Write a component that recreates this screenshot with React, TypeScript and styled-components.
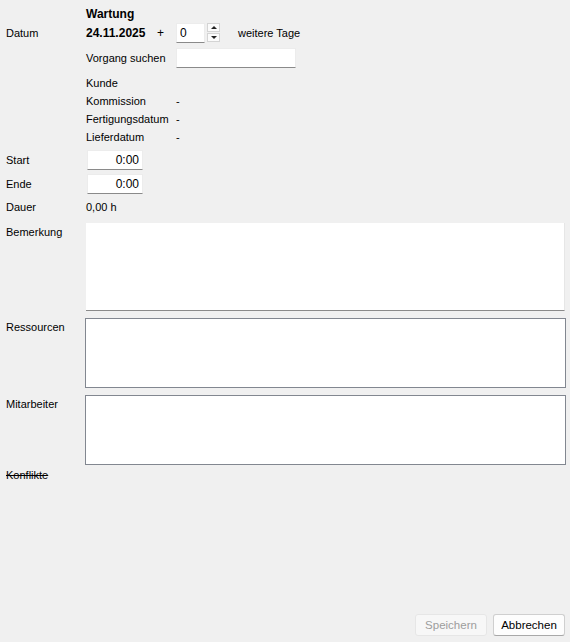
import React from "react";
import styled, { createGlobalStyle } from "styled-components";

const GlobalStyle = createGlobalStyle`
  html, body, #root {
    height: 100%;
  }
  body {
    margin: 0;
    background: #f0f0f0;
    font-family: "Liberation Sans", Arial, sans-serif;
    font-size: 11px;
    color: #000;
  }
`;

const Page = styled.div`
  min-height: 100%;
  box-sizing: border-box;
  display: flex;
  flex-direction: column;
  padding: 6px 4px 6px 6px;
`;

const Form = styled.div`
  display: grid;
  grid-template-columns: 80px 1fr;
  align-items: center;
`;

const Label = styled.div<{ $h: number; $top?: boolean; $mt?: number }>`
  height: ${({ $h }) => $h}px;
  margin-top: ${({ $mt }) => $mt ?? 0}px;
  display: flex;
  align-items: ${({ $top }) => ($top ? "flex-start" : "center")};
  padding-top: ${({ $top }) => ($top ? "3px" : "0")};
  box-sizing: border-box;
  align-self: start;
`;

const Cell = styled.div<{ $h?: number; $mt?: number; $shift?: number }>`
  ${({ $h }) => ($h ? `height: ${$h}px;` : "")}
  margin-top: ${({ $mt }) => $mt ?? 0}px;
  margin-left: ${({ $shift }) => $shift ?? 0}px;
  display: flex;
  align-items: center;
  align-self: start;
`;

const Bold = styled.span`
  font-weight: bold;
  font-size: 12px;
`;

const DateBox = styled.div`
  width: 90px;
  box-sizing: border-box;
  padding-right: 12px;
  display: flex;
  align-items: center;
  justify-content: space-between;
`;

const Plus = styled.span`
  font-size: 12px;
`;

const SpinBox = styled.div`
  display: flex;
  align-items: center;
  gap: 2px;
`;

const Field = styled.input<{ $w: number; $right?: boolean }>`
  width: ${({ $w }) => $w}px;
  height: 20px;
  box-sizing: border-box;
  border: 1px solid #ececec;
  border-bottom: 1px solid #8a8a8a;
  background: #fff;
  font: inherit;
  font-size: 12px;
  padding: 0 3px;
  text-align: ${({ $right }) => ($right ? "right" : "left")};
  outline: none;
  color: #000;
`;

const SpinButtons = styled.div`
  display: flex;
  flex-direction: column;
  gap: 1px;
`;

const SpinButton = styled.div`
  width: 13px;
  height: 9px;
  box-sizing: border-box;
  border: 1px solid #d4d4d4;
  background: #fbfbfb;
  display: flex;
  align-items: center;
  justify-content: center;
`;

const Arrow = styled.span<{ $down?: boolean }>`
  width: 0;
  height: 0;
  border-left: 3px solid transparent;
  border-right: 3px solid transparent;
  ${({ $down }) =>
    $down ? "border-top: 3px solid #222;" : "border-bottom: 3px solid #222;"}
`;

const After = styled.span`
  margin-left: 18px;
`;

const SubGrid = styled.div`
  display: grid;
  grid-template-columns: 90px 1fr;
  align-items: center;
`;

const SubLabel = styled.div<{ $h: number }>`
  height: ${({ $h }) => $h}px;
  display: flex;
  align-items: center;
`;

const Memo = styled.div<{ $h: number }>`
  height: ${({ $h }) => $h}px;
  width: 100%;
  margin-right: 1px;
  box-sizing: border-box;
  background: #fff;
  border-bottom: 1px solid #8a8a8a;
  border-right: 1px solid #e6e6e6;
`;

const ListBox = styled.div<{ $h: number }>`
  height: ${({ $h }) => $h}px;
  width: 100%;
  box-sizing: border-box;
  background: #fff;
  border: 1px solid #828790;
`;

const Struck = styled.span`
  text-decoration: line-through;
`;

const Footer = styled.div`
  margin-top: auto;
  padding-right: 1px;
  display: flex;
  justify-content: flex-end;
  gap: 6px;
`;

const Button = styled.button<{ $disabled?: boolean }>`
  width: 72px;
  height: 22px;
  box-sizing: border-box;
  font: inherit;
  font-size: 11.5px;
  border-radius: 3px;
  border: 1px solid ${({ $disabled }) => ($disabled ? "#e6e6e6" : "#cfcfcf")};
  border-bottom-color: ${({ $disabled }) => ($disabled ? "#e6e6e6" : "#a8a8a8")};
  background: ${({ $disabled }) => ($disabled ? "#f7f7f7" : "#fdfdfd")};
  color: ${({ $disabled }) => ($disabled ? "#9d9d9d" : "#000")};
  padding: 0;
`;

export default function App() {
  return (
    <>
      <GlobalStyle />
      <Page>
        <Form>
          <Label $h={16} />
          <Cell $h={16}>
            <Bold>Wartung</Bold>
          </Cell>

          <Label $h={21}>Datum</Label>
          <Cell $h={21}>
            <DateBox>
              <Bold>24.11.2025</Bold>
              <Plus>+</Plus>
            </DateBox>
            <SpinBox>
              <Field $w={29} defaultValue="0" />
              <SpinButtons>
                <SpinButton>
                  <Arrow />
                </SpinButton>
                <SpinButton>
                  <Arrow $down />
                </SpinButton>
              </SpinButtons>
            </SpinBox>
            <After>weitere Tage</After>
          </Cell>

          <Label $h={21} $mt={4} />
          <Cell $h={21} $mt={4}>
            <SubGrid>
              <SubLabel $h={21}>Vorgang suchen</SubLabel>
              <Field $w={120} />
            </SubGrid>
          </Cell>

          <Label $h={72} $mt={6} />
          <Cell $mt={6}>
            <SubGrid>
              <SubLabel $h={18}>Kunde</SubLabel>
              <span />
              <SubLabel $h={18}>Kommission</SubLabel>
              <span>-</span>
              <SubLabel $h={18}>Fertigungsdatum</SubLabel>
              <span>-</span>
              <SubLabel $h={18}>Lieferdatum</SubLabel>
              <span>-</span>
            </SubGrid>
          </Cell>

          <Label $h={20} $mt={4}>Start</Label>
          <Cell $h={20} $mt={4} $shift={1}>
            <Field $w={56} $right defaultValue="0:00" />
          </Cell>

          <Label $h={20} $mt={4}>Ende</Label>
          <Cell $h={20} $mt={4} $shift={1}>
            <Field $w={56} $right defaultValue="0:00" />
          </Cell>

          <Label $h={18} $mt={4}>Dauer</Label>
          <Cell $h={18} $mt={4}>0,00 h</Cell>

          <Label $h={87} $mt={7} $top>Bemerkung</Label>
          <Cell $mt={7}>
            <Memo $h={88} />
          </Cell>

          <Label $h={69} $mt={7} $top>Ressourcen</Label>
          <Cell $mt={7} $shift={-1}>
            <ListBox $h={70} />
          </Cell>

          <Label $h={69} $mt={7} $top>Mitarbeiter</Label>
          <Cell $mt={7} $shift={-1}>
            <ListBox $h={70} />
          </Cell>

          <Label $h={20}>
            <Struck>Konflikte</Struck>
          </Label>
          <span />
        </Form>

        <Footer>
          <Button $disabled>Speichern</Button>
          <Button>Abbrechen</Button>
        </Footer>
      </Page>
    </>
  );
}
